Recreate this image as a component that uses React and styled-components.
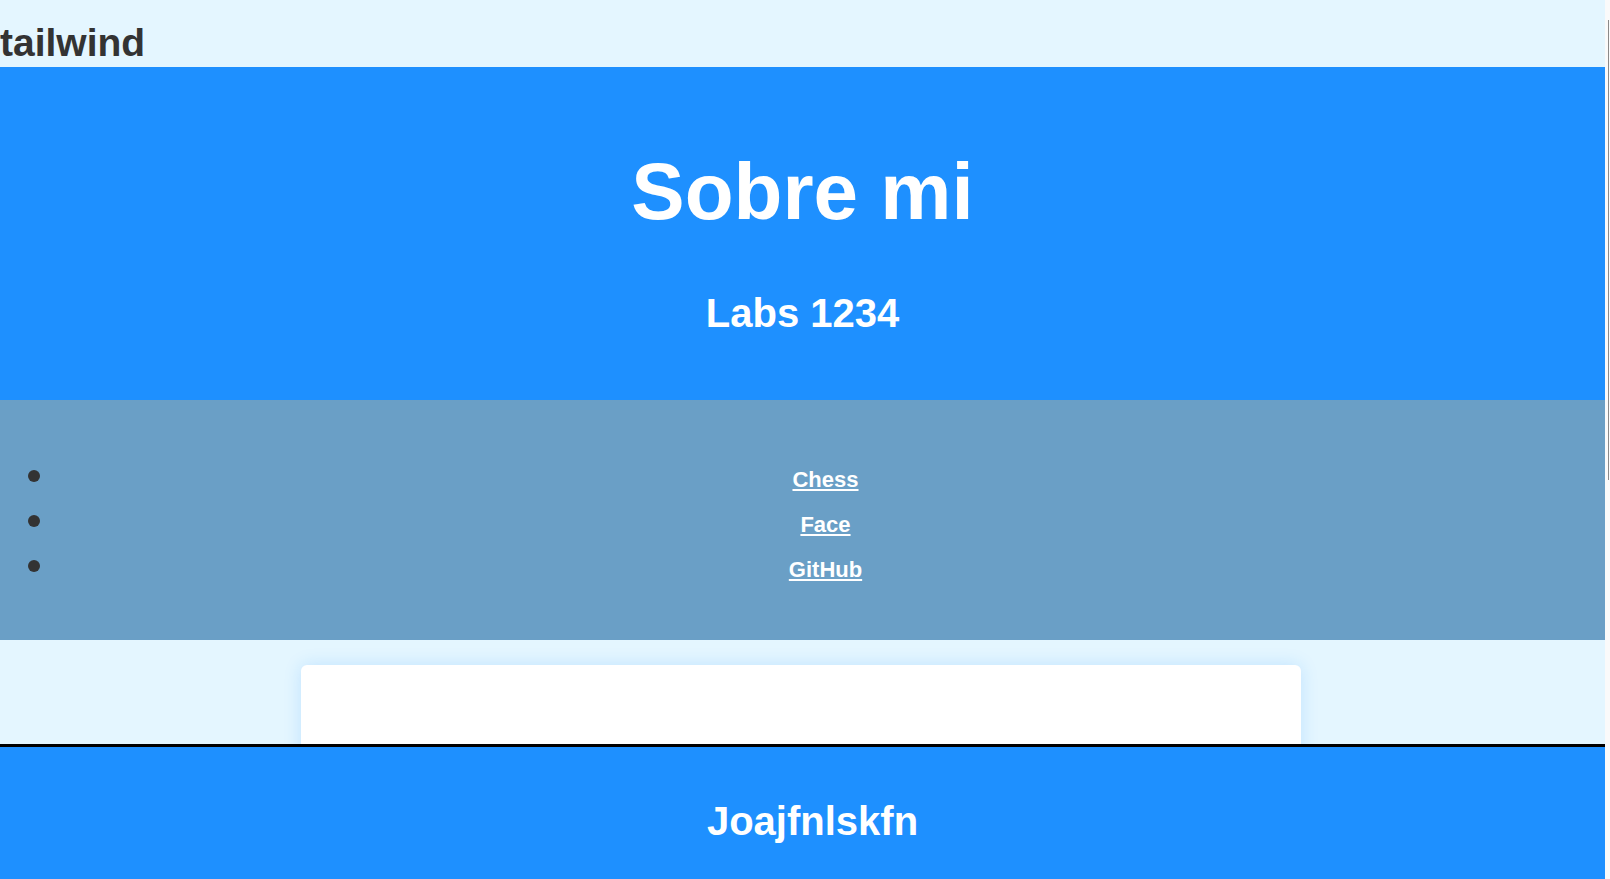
import React from 'react'
import styled, {createGlobalStyle} from 'styled-components'

const GlobalStyle = createGlobalStyle`
  html, body {
    margin: 0;
    padding: 0;
  }
  body {
    background: #fafafa;
    font-family: "Liberation Sans", Arial, sans-serif;
  }
`

// the page leaves a thin strip on the right, like the scrollbar in the shot
const Page = styled.div`
  margin-right: 5px;
  background: #e4f6ff;
`

const ScrollThumb = styled.div`
  position: fixed;
  top: 20px;
  right: 1px;
  width: 1px;
  height: 460px;
  background: #8a8a8a;
`

const TopBar = styled.header`
  height: 67px;
  padding-top: 20px;
  box-sizing: border-box;
`

const Brand = styled.h1`
  margin: 0;
  font-size: 39px;
  font-weight: bold;
  color: #333;
  line-height: 46px;
`

const Hero = styled.section`
  background: #1e90ff;
  color: #fff;
  text-align: center;
  padding: 79px 0 64px;
`

const Title = styled.h1`
  margin: 0;
  font-size: 80px;
  line-height: 92px;
`

const Subtitle = styled.h2`
  margin: 52px 0 0;
  font-size: 40px;
  line-height: 46px;
`

const Nav = styled.nav`
  background: #6a9fc6;
  padding: 67px 0 58px;
`

const LinkList = styled.ul`
  list-style: none;
  margin: 0;
  padding: 0;
`

const Item = styled.li`
  display: flex;
  align-items: flex-start;
  height: 25px;
  & + & {
    margin-top: 20px;
  }
`

const Dot = styled.span`
  width: 12px;
  height: 12px;
  border-radius: 50%;
  background: #333;
  margin: 3px 0 0 28px;
  flex: none;
`

const LinkCell = styled.div`
  flex: 1;
  text-align: center;
  padding-left: 6px;
`

const NavLink = styled.a`
  color: #fff;
  font-size: 22px;
  font-weight: bold;
  line-height: 25px;
  text-decoration: underline;
`

const Main = styled.main`
  padding: 25px 4px 40px 0;
`

const Card = styled.div`
  width: 1000px;
  height: 900px;
  margin: 0 auto;
  background: #fff;
  border-radius: 6px;
  box-shadow: 0 0 18px rgba(0, 130, 255, 0.16);
`

const Footer = styled.footer`
  position: fixed;
  left: 0;
  right: 5px;
  bottom: 0;
  height: 135px;
  box-sizing: border-box;
  border-top: 3px solid #000;
  background: #1e90ff;
  color: #fff;
  text-align: center;
  padding: 51px 0 0 20px;
`

const FooterText = styled.h2`
  margin: 0;
  font-size: 40px;
  line-height: 46px;
`

const links = ['Chess', 'Face', 'GitHub']

export default function App() {
  return (
    <Page>
      <GlobalStyle />
      <TopBar>
        <Brand>tailwind</Brand>
      </TopBar>
      <Hero>
        <Title>Sobre mi</Title>
        <Subtitle>Labs 1234</Subtitle>
      </Hero>
      <Nav>
        <LinkList>
          {links.map(name => (
            <Item key={name}>
              <Dot />
              <LinkCell>
                <NavLink href="#">{name}</NavLink>
              </LinkCell>
            </Item>
          ))}
        </LinkList>
      </Nav>
      <Main>
        <Card />
      </Main>
      <Footer>
        <FooterText>Joajfnlskfn</FooterText>
      </Footer>
      <ScrollThumb />
    </Page>
  )
}
